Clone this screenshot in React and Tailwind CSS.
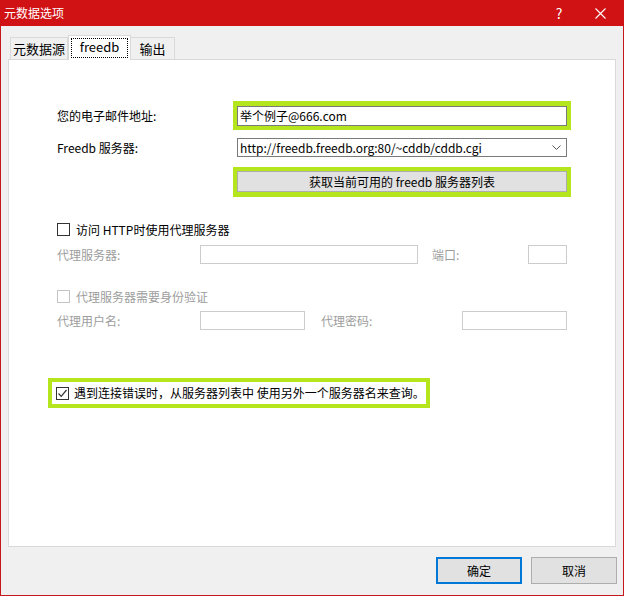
import React from 'react';

const font = { fontFamily: '"Noto Sans CJK SC", "Liberation Sans", sans-serif' };

const Check = ({ checked, disabled }) => (
  <span
    className={`w-[13px] h-[13px] border bg-white flex items-center justify-center shrink-0 ${
      disabled ? 'border-[#c4c4c4]' : 'border-[#333]'
    }`}
  >
    {checked && (
      <svg width="11" height="11" viewBox="0 0 11 11">
        <path d="M1.5 5.5 L4.2 8.3 L9.5 2" fill="none" stroke="#333" strokeWidth="1.2" />
      </svg>
    )}
  </span>
);

export default function App() {
  return (
    <div
      className="w-[624px] h-[596px] bg-[#f0f0f0] border-x border-b border-[#c8161d] flex flex-col text-[12px] text-black"
      style={font}
    >
      {/* Title bar */}
      <div className="h-[26px] -mx-px bg-[#d01214] flex items-center text-white shrink-0">
        <span className="pl-[4px] text-[12px] leading-none">元数据选项</span>
        <span className="ml-auto w-[20px] text-center text-[14px] leading-none mr-[26px]">?</span>
        <svg width="11" height="11" viewBox="0 0 11 11" className="mr-[18px]">
          <path d="M0.5 0.5 L10.5 10.5 M10.5 0.5 L0.5 10.5" stroke="white" strokeWidth="1.1" />
        </svg>
      </div>

      {/* Tabs */}
      <div className="h-[33px] flex items-end pl-[9px] shrink-0">
        <div className="w-[58px] h-[22px] border border-b-0 border-[#d9d9d9] bg-[#f0f0f0] flex items-center justify-center text-[13px]">
          元数据源
        </div>
        <div className="relative z-10 w-[63px] h-[25px] -mb-px border border-b-0 border-[#d9d9d9] bg-white p-[2px]">
          <div className="h-full border border-dotted border-black flex items-center justify-center text-[13px] pb-[2px]">
            freedb
          </div>
        </div>
        <div className="w-[44px] h-[22px] border border-b-0 border-l-0 border-[#d9d9d9] bg-[#f0f0f0] flex items-center justify-center text-[13px]">
          输出
        </div>
      </div>

      {/* Panel */}
      <div className="mx-[7px] h-[488px] bg-white border border-[#d9d9d9] pl-[48px] pt-[41px] flex flex-col shrink-0">
        <div className="flex items-center">
          <span className="w-[176px]">您的电子邮件地址:</span>
          <div className="w-[338px] h-[29px] bg-[#b5e61d] pl-[4px] pr-[4px] pt-[5px] pb-[4px]">
            <div className="h-full bg-white border border-[#7a7a7a] flex items-center pl-[2px]">
              举个例子@666.com
            </div>
          </div>
        </div>

        <div className="flex items-center mt-[8px]">
          <span className="w-[180px]">Freedb 服务器:</span>
          <div className="w-[330px] h-[19px] border border-[#7a7a7a] flex items-center pl-[2px] pr-[5px]">
            <span>http://freedb.freedb.org:80/~cddb/cddb.cgi</span>
            <svg width="9" height="5" viewBox="0 0 9 5" className="ml-auto">
              <path d="M0.5 0.5 L4.5 4.5 L8.5 0.5" fill="none" stroke="#555" strokeWidth="1" />
            </svg>
          </div>
        </div>

        <div className="flex mt-[10px] pl-[176px]">
          <div className="w-[338px] h-[30px] bg-[#b5e61d] px-[4px] pt-[4px] pb-[5px]">
            <div className="h-full bg-[#e1e1e1] border border-[#adadad] flex items-center justify-center">
              获取当前可用的 freedb 服务器列表
            </div>
          </div>
        </div>

        <div className="flex items-center gap-[6px] mt-[26px] h-[13px]">
          <Check />
          <span>访问 HTTP时使用代理服务器</span>
        </div>

        <div className="flex items-center mt-[9px] text-[#9d9d9d]">
          <span className="w-[143px]">代理服务器:</span>
          <div className="w-[218px] h-[19px] border border-[#cccccc]" />
          <span className="ml-[14px] w-[96px]">端口:</span>
          <div className="w-[39px] h-[19px] border border-[#cccccc]" />
        </div>

        <div className="flex items-center gap-[6px] mt-[26px] h-[13px] text-[#9d9d9d]">
          <Check disabled />
          <span>代理服务器需要身份验证</span>
        </div>

        <div className="flex items-center mt-[8px] text-[#9d9d9d]">
          <span className="w-[143px]">代理用户名:</span>
          <div className="w-[105px] h-[19px] border border-[#cccccc]" />
          <span className="ml-[16px] w-[141px]">代理密码:</span>
          <div className="w-[105px] h-[19px] border border-[#cccccc]" />
        </div>

        <div className="-ml-[9px] mt-[48px] w-[382px] h-[30px] bg-[#b5e61d] p-[4px]">
          <div className="h-full bg-white flex items-center gap-[5px] pl-[4px]">
            <Check checked />
            <span>遇到连接错误时，从服务器列表中 使用另外一个服务器名来查询。</span>
          </div>
        </div>
      </div>

      {/* Buttons */}
      <div className="flex justify-end gap-[9px] pr-[6px] mt-[10px]">
        <button className="w-[86px] h-[27px] bg-[#e1e1e1] border-2 border-[#0078d7] text-[12px]">确定</button>
        <button className="w-[86px] h-[27px] bg-[#e1e1e1] border border-[#adadad] text-[12px]">取消</button>
      </div>
    </div>
  );
}
